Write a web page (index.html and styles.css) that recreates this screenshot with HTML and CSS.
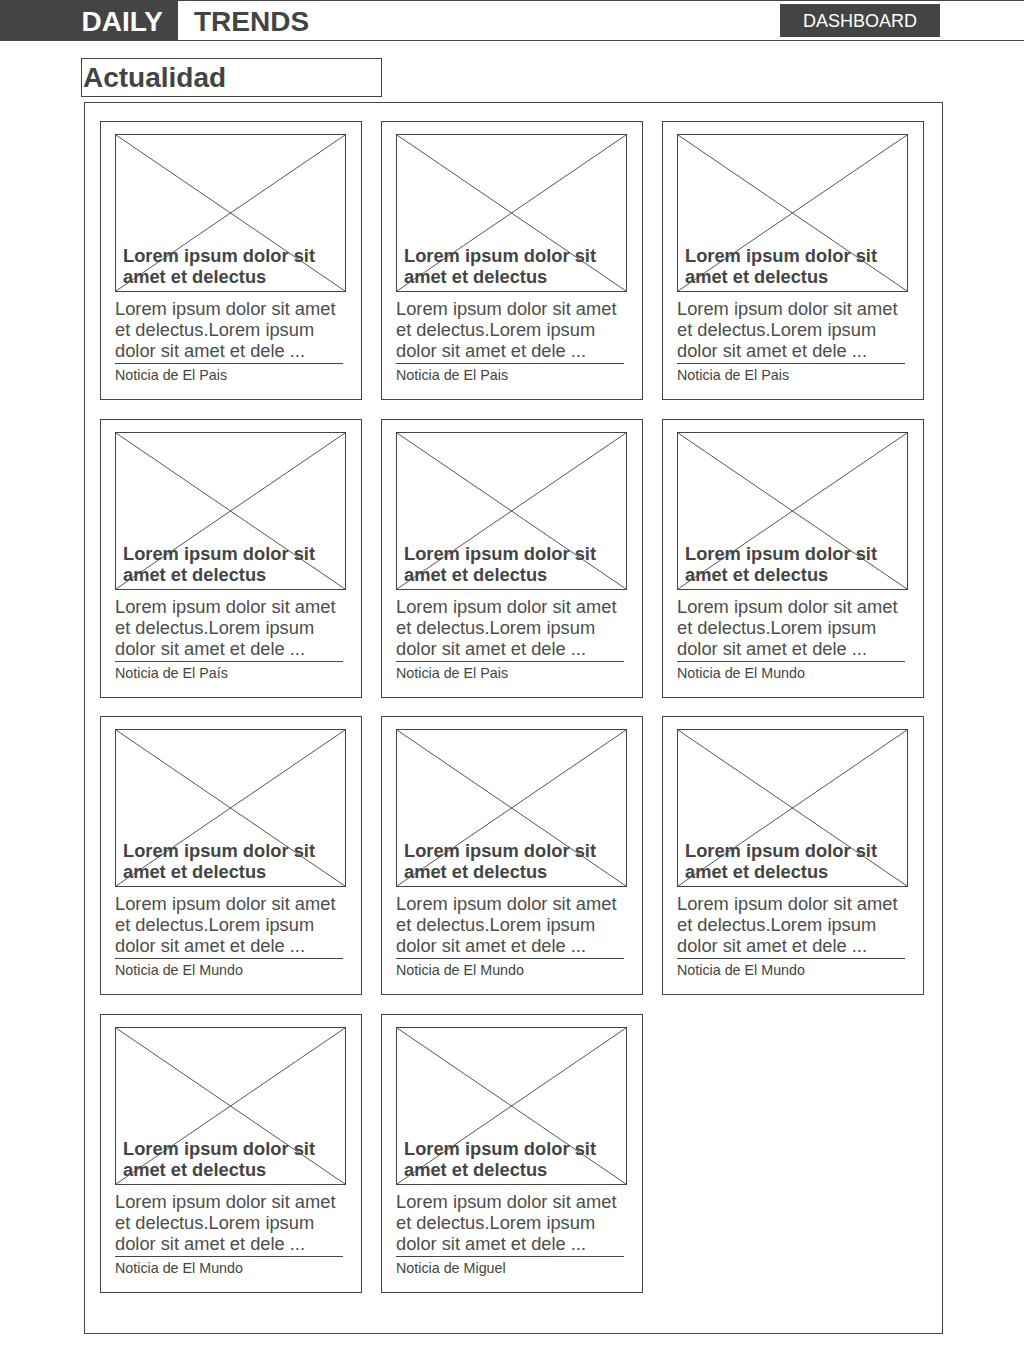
FILE: index.html
```html
<!DOCTYPE html>
<html lang="es">
<head>
  <meta charset="UTF-8" />
  <title>Daily Trends</title>
  <link rel="stylesheet" href="styles.css">
</head>
<body>
  <header class="topbar">
    <div class="brand-dark">DAILY</div>
    <div class="brand-light">TRENDS</div>
    <a class="dash-btn" href="#">DASHBOARD</a>
  </header>

  <h1 class="section-title">Actualidad</h1>

  <main class="feed">
    <div class="grid">
      <div class="card">
        <div class="thumb">
          <svg class="cross" viewBox="0 0 100 100" preserveAspectRatio="none"><line x1="0" y1="0" x2="100" y2="100"/><line x1="100" y1="0" x2="0" y2="100"/></svg>
          <h2 class="thumb-title">Lorem ipsum dolor sit amet et delectus</h2>
        </div>
        <p class="excerpt">Lorem ipsum dolor sit amet et delectus.Lorem ipsum dolor sit amet et dele ...</p>
        <div class="source">Noticia de El Pais</div>
      </div>
      <div class="card">
        <div class="thumb">
          <svg class="cross" viewBox="0 0 100 100" preserveAspectRatio="none"><line x1="0" y1="0" x2="100" y2="100"/><line x1="100" y1="0" x2="0" y2="100"/></svg>
          <h2 class="thumb-title">Lorem ipsum dolor sit amet et delectus</h2>
        </div>
        <p class="excerpt">Lorem ipsum dolor sit amet et delectus.Lorem ipsum dolor sit amet et dele ...</p>
        <div class="source">Noticia de El Pais</div>
      </div>
      <div class="card">
        <div class="thumb">
          <svg class="cross" viewBox="0 0 100 100" preserveAspectRatio="none"><line x1="0" y1="0" x2="100" y2="100"/><line x1="100" y1="0" x2="0" y2="100"/></svg>
          <h2 class="thumb-title">Lorem ipsum dolor sit amet et delectus</h2>
        </div>
        <p class="excerpt">Lorem ipsum dolor sit amet et delectus.Lorem ipsum dolor sit amet et dele ...</p>
        <div class="source">Noticia de El Pais</div>
      </div>

      <div class="card">
        <div class="thumb">
          <svg class="cross" viewBox="0 0 100 100" preserveAspectRatio="none"><line x1="0" y1="0" x2="100" y2="100"/><line x1="100" y1="0" x2="0" y2="100"/></svg>
          <h2 class="thumb-title">Lorem ipsum dolor sit amet et delectus</h2>
        </div>
        <p class="excerpt">Lorem ipsum dolor sit amet et delectus.Lorem ipsum dolor sit amet et dele ...</p>
        <div class="source">Noticia de El País</div>
      </div>
      <div class="card">
        <div class="thumb">
          <svg class="cross" viewBox="0 0 100 100" preserveAspectRatio="none"><line x1="0" y1="0" x2="100" y2="100"/><line x1="100" y1="0" x2="0" y2="100"/></svg>
          <h2 class="thumb-title">Lorem ipsum dolor sit amet et delectus</h2>
        </div>
        <p class="excerpt">Lorem ipsum dolor sit amet et delectus.Lorem ipsum dolor sit amet et dele ...</p>
        <div class="source">Noticia de El Pais</div>
      </div>
      <div class="card">
        <div class="thumb">
          <svg class="cross" viewBox="0 0 100 100" preserveAspectRatio="none"><line x1="0" y1="0" x2="100" y2="100"/><line x1="100" y1="0" x2="0" y2="100"/></svg>
          <h2 class="thumb-title">Lorem ipsum dolor sit amet et delectus</h2>
        </div>
        <p class="excerpt">Lorem ipsum dolor sit amet et delectus.Lorem ipsum dolor sit amet et dele ...</p>
        <div class="source">Noticia de El Mundo</div>
      </div>

      <div class="card">
        <div class="thumb">
          <svg class="cross" viewBox="0 0 100 100" preserveAspectRatio="none"><line x1="0" y1="0" x2="100" y2="100"/><line x1="100" y1="0" x2="0" y2="100"/></svg>
          <h2 class="thumb-title">Lorem ipsum dolor sit amet et delectus</h2>
        </div>
        <p class="excerpt">Lorem ipsum dolor sit amet et delectus.Lorem ipsum dolor sit amet et dele ...</p>
        <div class="source">Noticia de El Mundo</div>
      </div>
      <div class="card">
        <div class="thumb">
          <svg class="cross" viewBox="0 0 100 100" preserveAspectRatio="none"><line x1="0" y1="0" x2="100" y2="100"/><line x1="100" y1="0" x2="0" y2="100"/></svg>
          <h2 class="thumb-title">Lorem ipsum dolor sit amet et delectus</h2>
        </div>
        <p class="excerpt">Lorem ipsum dolor sit amet et delectus.Lorem ipsum dolor sit amet et dele ...</p>
        <div class="source">Noticia de El Mundo</div>
      </div>
      <div class="card">
        <div class="thumb">
          <svg class="cross" viewBox="0 0 100 100" preserveAspectRatio="none"><line x1="0" y1="0" x2="100" y2="100"/><line x1="100" y1="0" x2="0" y2="100"/></svg>
          <h2 class="thumb-title">Lorem ipsum dolor sit amet et delectus</h2>
        </div>
        <p class="excerpt">Lorem ipsum dolor sit amet et delectus.Lorem ipsum dolor sit amet et dele ...</p>
        <div class="source">Noticia de El Mundo</div>
      </div>

      <div class="card">
        <div class="thumb">
          <svg class="cross" viewBox="0 0 100 100" preserveAspectRatio="none"><line x1="0" y1="0" x2="100" y2="100"/><line x1="100" y1="0" x2="0" y2="100"/></svg>
          <h2 class="thumb-title">Lorem ipsum dolor sit amet et delectus</h2>
        </div>
        <p class="excerpt">Lorem ipsum dolor sit amet et delectus.Lorem ipsum dolor sit amet et dele ...</p>
        <div class="source">Noticia de El Mundo</div>
      </div>
      <div class="card">
        <div class="thumb">
          <svg class="cross" viewBox="0 0 100 100" preserveAspectRatio="none"><line x1="0" y1="0" x2="100" y2="100"/><line x1="100" y1="0" x2="0" y2="100"/></svg>
          <h2 class="thumb-title">Lorem ipsum dolor sit amet et delectus</h2>
        </div>
        <p class="excerpt">Lorem ipsum dolor sit amet et delectus.Lorem ipsum dolor sit amet et dele ...</p>
        <div class="source">Noticia de Miguel</div>
      </div>
    </div>
  </main>
</body>
</html>
```

FILE: styles.css
```css
body {
  margin: 0;
  background: #fff;
  font-family: "Liberation Sans", Arial, sans-serif;
  color: #444;
}

/* Barra superior */
.topbar {
  display: flex;
  align-items: flex-start;
  height: 39px;
  border-top: 1px solid #444;
  border-bottom: 1px solid #444;
}

.brand-dark {
  width: 163px;
  height: 39px;
  padding-right: 15px;
  background-color: #444;
  color: #fff;
  font-size: 28px;
  font-weight: bold;
  line-height: 42px;
  text-align: right;
}

.brand-light {
  margin-left: 16px;
  font-size: 28px;
  font-weight: bold;
  line-height: 42px;
}

.dash-btn {
  margin-left: auto;
  margin-right: 84px;
  margin-top: 3px;
  width: 160px;
  height: 33px;
  background-color: #444;
  color: #fff;
  font-size: 18px;
  line-height: 34px;
  text-align: center;
  text-decoration: none;
}

/* Titulo de seccion */
.section-title {
  box-sizing: border-box;
  width: 301px;
  height: 39px;
  margin: 17px 0 0 81px;
  padding-left: 1px;
  border: 1px solid #444;
  font-size: 28px;
  line-height: 37px;
}

/* Contenedor de noticias */
.feed {
  box-sizing: border-box;
  width: 859px;
  height: 1232px;
  margin: 5px 0 0 84px;
  padding: 18px 0 0 15px;
  border: 1px solid #444;
}

.grid {
  display: grid;
  grid-template-columns: repeat(3, 262px);
  column-gap: 19px;
  row-gap: 18.5px;
}

.card {
  box-sizing: border-box;
  height: 279px;
  padding: 12px 0 0 14px;
  border: 1px solid #444;
}

.thumb {
  position: relative;
  box-sizing: border-box;
  width: 231px;
  height: 158px;
  border: 1px solid #444;
}

.cross {
  display: block;
  width: 100%;
  height: 100%;
}

.cross line {
  stroke: #555;
  stroke-width: 1;
  vector-effect: non-scaling-stroke;
}

.thumb-title {
  position: absolute;
  left: 7px;
  bottom: 4px;
  margin: 0;
  width: 205px;
  font-size: 18.3px;
  font-weight: bold;
  line-height: 21px;
  color: #444;
}

.excerpt {
  width: 230px;
  margin: 6px 0 0 0;
  font-size: 18.3px;
  line-height: 21px;
  color: #4d4d4d;
}

.source {
  width: 228px;
  margin-top: 2px;
  padding-top: 3px;
  border-top: 1px solid #444;
  font-size: 14.3px;
  line-height: 16px;
  color: #444;
}
```
